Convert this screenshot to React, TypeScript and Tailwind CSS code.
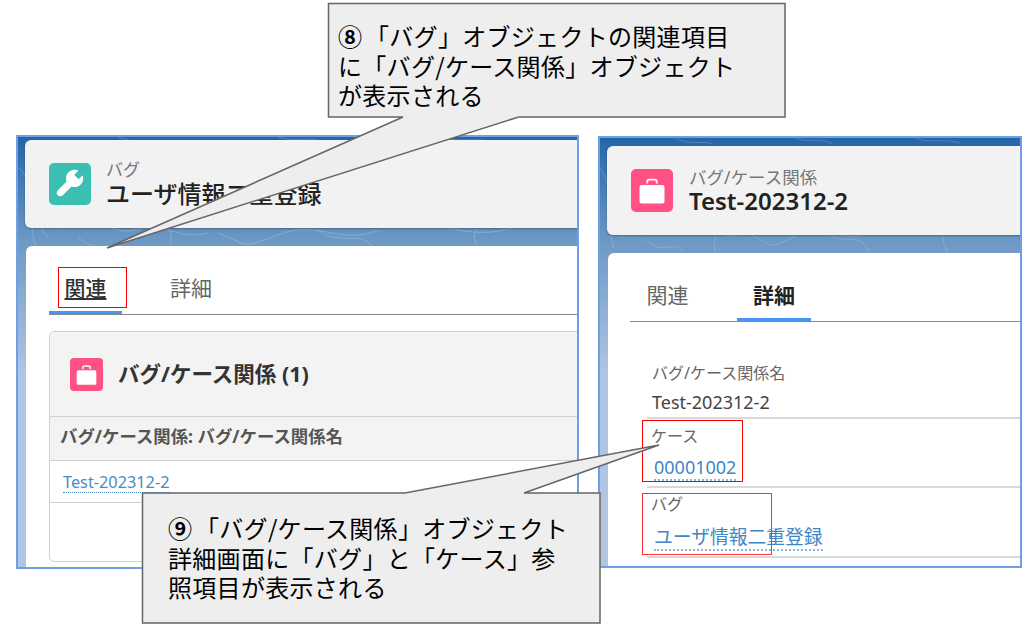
const CJK = "font-['Noto_Sans_CJK_JP','Noto_Sans',sans-serif]"

function Wrench({ className }: { className: string }) {
  return (
    <svg viewBox="0 0 42 42" className={className}>
      <path
        d="M29.5 7.6C28.2 7.1 27 6.8 25.6 6.8 20.8 6.8 17 10.6 17 15.4c0 1.1.2 2.1.6 3.1L8.8 27.2c-1.4 1.4-1.4 3.6 0 5s3.6 1.4 5 0l8.7-8.8c1 .4 2 .6 3.1.6 4.8 0 8.6-3.8 8.6-8.6 0-1.2-.2-2.2-.6-3.2l-4 4-4.4-4.4z"
        fill="#fff"
      />
    </svg>
  )
}

function Briefcase({ className }: { className: string }) {
  return (
    <svg viewBox="0 0 42 42" className={className}>
      <path d="M16.2 14v-1.6c0-1.2 1-2.2 2.2-2.2h5.2c1.2 0 2.2 1 2.2 2.2V14" fill="none" stroke="#fff" strokeWidth="1.8" />
      <rect x="8.5" y="15.5" width="25" height="18.5" rx="2" fill="#fff" />
    </svg>
  )
}

function Topo() {
  return (
    <svg className="absolute left-0 top-0 w-full h-[120px]" viewBox="0 0 560 120" preserveAspectRatio="none" fill="none" stroke="#ffffff" strokeOpacity="0.2">
      <path d="M0 30c20 20 10 50 30 70M40 92c30-20 60 10 80 0s40 12 70 4M200 96c30 10 20 18 60 2s60 10 100-4M380 90c40-10 70 14 110 2s40 6 70-6" />
      <path d="M60 100c20 20 40 0 50 14M150 90c10 14-6 20 10 28M300 92c20 20 50-4 60 26M460 92c-10 14 10 20 0 28M10 60c10 16 0 30 8 50" />
      <path d="M100 0c20 8 40 2 50 6M260 0c20 6 30-2 50 6M420 0c20 6 40 0 60 5" />
    </svg>
  )
}

function Field({ label, value, wide }: { label: string; value: string; wide?: boolean }) {
  return (
    <div className={`border-b-2 border-[#d9d9d9] flex flex-col pl-[4px] ${wide ? 'h-[70px]' : 'h-[69px]'}`}>
      <div className={`text-[16px] leading-[22px] text-[#666] ${wide ? 'mt-[5px]' : 'mt-[6px]'}`}>{label}</div>
      <div className={wide ? 'mt-[10px] pl-[3px]' : 'mt-[8px] pl-[3px]'}>
        <span className={`text-[#3f86c6] border-b-2 border-dotted border-[#8fb4d8] leading-[24px] inline-block ${wide ? 'text-[18.8px]' : 'text-[18px]'}`}>{value}</span>
      </div>
    </div>
  )
}

function Tabs({ active }: { active: 0 | 1 }) {
  return (
    <div className={`border-b border-[#8a8a8a] h-[69px] flex items-end ${active === 0 ? 'gap-[32px]' : 'gap-[34px]'}`}>
      <div className={`w-[73px] h-[44px] pt-[3px] flex justify-center text-[21px] leading-[30px] ${active === 0 ? 'text-[#333] font-medium underline underline-offset-2 border-b-[3px] border-[#4596f5]' : 'text-[#666] pl-[2px]'}`}>関連</div>
      <div className={`w-[74px] h-[44px] pt-[3px] flex justify-center text-[21px] leading-[30px] ${active === 1 ? 'text-[#222] font-semibold border-b-[3px] border-[#4596f5]' : 'text-[#666]'}`}>詳細</div>
    </div>
  )
}

export default function App() {
  return (
    <div className="relative w-[1036px] h-[628px] bg-white overflow-hidden font-['Noto_Sans','Noto_Sans_CJK_JP',sans-serif]">
      <div className="flex items-start pl-[16px] pt-[135px] gap-[19px]">
        {/* left window */}
        <div className="relative w-[563px] h-[434px] border-2 border-[#6f9fe6] overflow-hidden bg-[linear-gradient(to_bottom,#2366a8,#6f9ac6_25%,#b0c5e2_55%)] pl-[7px] pt-[3px]">
          <Topo />
          <div className="relative h-[88px] w-[600px] rounded-[6px] bg-[#f2f2f2] shadow-[0_1px_2px_rgba(0,0,0,0.3)] flex items-center pl-[24px] gap-[16px]">
            <div className="w-[42px] h-[42px] rounded-[5px] bg-[#3bbfb0]"><Wrench className="w-[42px] h-[42px]" /></div>
            <div className="flex flex-col -ml-[1px]">
              <span className="text-[17px] leading-[20px] mt-[2px] text-[#777]">バグ</span>
              <span className="text-[24px] leading-[32px] -mt-[2px] font-medium text-[#222] whitespace-nowrap">ユーザ情報二重登録</span>
            </div>
          </div>
          <div className="relative mt-[18px] ml-[1px] w-[600px] h-[340px] rounded-t-[6px] bg-white pl-[23px]">
            <Tabs active={0} />
            <div className="mt-[16px] h-[231px] border border-[#d0d0d0] rounded-[5px] overflow-hidden">
              <div className="h-[85px] bg-[#f3f3f3] border-b border-[#d0d0d0] flex items-center pl-[20px] gap-[15px]">
                <div className="w-[33px] h-[33px] rounded-[4px] bg-[#ff5184]"><Briefcase className="w-[33px] h-[33px]" /></div>
                <span className="text-[21.5px] font-bold text-[#333] whitespace-nowrap">バグ/ケース関係 (1)</span>
              </div>
              <div className="h-[44px] bg-[#f3f3f3] border-b border-[#d0d0d0] flex items-center pl-[10px] pb-[4px] text-[17.4px] font-bold text-[#555] whitespace-nowrap">バグ/ケース関係: バグ/ケース関係名</div>
              <div className="h-[42px] border-b border-[#d0d0d0] flex items-center pl-[13px] pt-[2px]">
                <span className="text-[16.3px] leading-[20px] text-[#4a8ac4] border-b border-dotted border-[#4a8ac4]">Test-202312-2</span>
              </div>
            </div>
          </div>
        </div>

        {/* right window */}
        <div className="relative mt-[1px] w-[424px] h-[432px] border-2 border-[#6f9fe6] overflow-hidden bg-[linear-gradient(to_bottom,#2366a8,#6f9ac6_25%,#b0c5e2_55%)] pl-[7px] pt-[8px]">
          <Topo />
          <div className="relative h-[89px] w-[480px] rounded-[6px] bg-[#f2f2f2] shadow-[0_1px_2px_rgba(0,0,0,0.3)] flex items-center pl-[24px] gap-[16px]">
            <div className="w-[42px] h-[43px] rounded-[5px] bg-[#ff5184]"><Briefcase className="w-[42px] h-[43px]" /></div>
            <div className="flex flex-col -mt-[3px]">
              <span className="text-[17.5px] leading-[24px] mt-[2px] text-[#777] whitespace-nowrap">バグ/ケース関係</span>
              <span className="text-[24px] leading-[28px] -mt-[2px] font-semibold text-[#222] whitespace-nowrap">Test-202312-2</span>
            </div>
          </div>
          <div className="relative mt-[18px] ml-[1px] w-[480px] h-[340px] rounded-t-[6px] bg-white pl-[22px]">
            <div className="w-[400px]"><Tabs active={1} /></div>
            <div className="w-[400px] pl-[17px] mt-[41px]">
              <div className="border-b-2 border-[#d9d9d9] h-[57px] flex flex-col pl-[5px] -mt-[1px]">
                <div className="text-[16px] leading-[22px] text-[#666]">バグ/ケース関係名</div>
                <div className="mt-[7px] text-[18px] leading-[22px] text-[#444]">Test-202312-2</div>
              </div>
              <Field label="ケース" value="00001002" />
              <Field label="バグ" value="ユーザ情報二重登録" wide />
            </div>
          </div>
        </div>
      </div>

      {/* annotation red frames */}
      <div className="absolute left-[58px] top-[267px] w-[69px] h-[41px] border border-[#ff0000]" />
      <div className="absolute left-[642px] top-[420px] w-[101px] h-[62px] border-[1.5px] border-[#ff0000]" />
      <div className="absolute left-[642px] top-[493px] w-[130px] h-[62px] border-[1.5px] border-[#ff3030]" />

      {/* callouts */}
      <svg className="absolute left-0 top-0 w-[1036px] h-[628px]" viewBox="0 0 1036 628" fill="#eeeeee" stroke="#666" strokeWidth="1.5">
        <path d="M328.5 3.5H785V117H518.5L107 248 403 117H328.5z" />
        <path d="M142.5 493H405L659 445 524 493H600V623H142.5z" />
      </svg>
      <div className={`absolute left-[338px] top-[21px] w-[440px] text-[24px] leading-[29.5px] tracking-[0.3px] text-black ${CJK}`}>
        <div className="whitespace-nowrap"><span className="font-bold inline-block w-[27px]">⑧</span>「バグ」オブジェクトの関連項目</div>
        <div className="whitespace-nowrap">に「バグ/ケース関係」オブジェクト</div>
        <div className="whitespace-nowrap">が表示される</div>
      </div>
      <div className={`absolute left-[168px] top-[513px] w-[420px] text-[24px] leading-[29.5px] tracking-[0.3px] text-black ${CJK}`}>
        <div className="whitespace-nowrap"><span className="font-bold inline-block w-[27px]">⑨</span>「バグ/ケース関係」オブジェクト</div>
        <div className="whitespace-nowrap">詳細画面に「バグ」と「ケース」参</div>
        <div className="whitespace-nowrap">照項目が表示される</div>
      </div>
    </div>
  )
}
